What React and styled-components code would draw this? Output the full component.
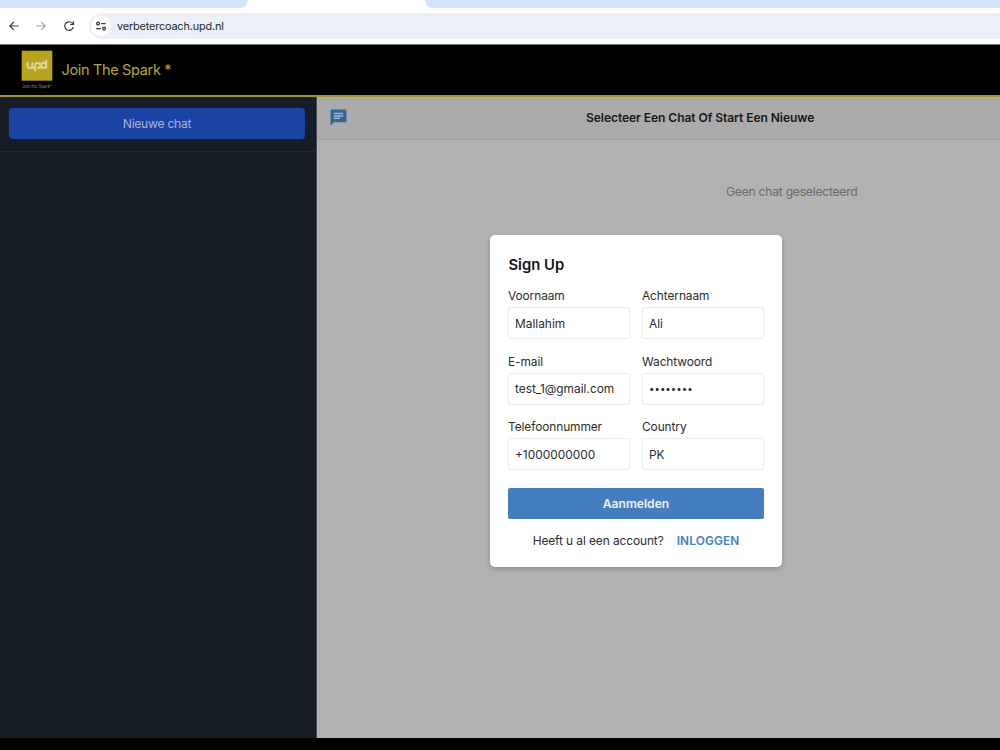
import React from 'react'
import styled, { createGlobalStyle } from 'styled-components';

const GlobalStyle = createGlobalStyle`
  * { box-sizing: border-box; }
  body {
    margin: 0;
    overflow: hidden;
    background: #000;
    font-family: Inter, "Liberation Sans", sans-serif;
  }
  button, input { font-family: inherit; }
`;

const Page = styled.div`
  width: 1000px;
  height: 750px;
  display: flex;
  flex-direction: column;
  overflow: hidden;
`;

const TabStrip = styled.div`
  height: 9px;
  flex: none;
  display: flex;
  background: #fff;
`;

const TabArea = styled.div`
  width: ${(props) => props.$width};
  margin-left: ${(props) => props.$gap || '0'};
  height: 8px;
  background: #d3e2fd;
  border-radius: ${(props) => props.$radius};
`;

const Toolbar = styled.div`
  height: 36px;
  flex: none;
  display: flex;
  align-items: center;
  padding: 0 0 1px 7px;
  background: #fff;
  border-bottom: 1px solid #707276;
`;

const NavIcon = styled.svg`
  width: 14px;
  height: 14px;
  margin-right: ${(props) => props.$gap};
  fill: none;
  stroke: ${(props) => props.$color || '#3a3d40'};
  stroke-width: 1.2;
`;

const AddressBar = styled.div`
  flex: 1;
  height: 26px;
  display: flex;
  align-items: center;
  padding-left: 2px;
  border-radius: 13px 0 0 13px;
  background: #ebf0f8;
`;

const SiteInfo = styled.div`
  width: 20px;
  height: 20px;
  display: flex;
  align-items: center;
  justify-content: center;
  border-radius: 50%;
  background: #fff;
`;

const Url = styled.span`
  margin-left: 6px;
  font-size: 10.9px;
  line-height: 16px;
  letter-spacing: -0.17px;
  color: #26282b;
`;

const Header = styled.header`
  height: 52px;
  flex: none;
  display: flex;
  align-items: flex-start;
  padding-left: 21px;
  background: #000;
  border-bottom: 2px solid #a19425;
`;

const Logo = styled.svg`
  width: 32px;
  height: 40px;
  margin-top: 5px;
`;

const Brand = styled.h1`
  margin: 16px 0 0 8.5px;
  font-size: 14.5px;
  line-height: 18px;
  letter-spacing: -0.33px;
  font-weight: 400;
  color: #b6a82b;
`;

const Main = styled.main`
  height: 641px;
  flex: none;
  display: flex;
`;

const Sidebar = styled.aside`
  width: 317px;
  background: #161d26;
  border-right: 1px solid #454b52;
`;

const SidebarTop = styled.div`
  height: 55px;
  padding: 11px 11px 0 9px;
  border-bottom: 1px solid #202a36;
`;

const NewChat = styled.button`
  display: block;
  width: 296px;
  height: 31px;
  padding: 0;
  border: 0;
  border-radius: 4px;
  background: #1b43a6;
  color: #a8b3d0;
  font-size: 12.2px;
  letter-spacing: -0.3px;
`;

const Content = styled.section`
  flex: 1;
  background: #b2b2b2;
`;

const ChatBar = styled.div`
  height: 43px;
  display: flex;
  align-items: center;
  padding-left: 12px;
  background: #ababac;
  border-bottom: 1px solid #a0a1a3;
`;

const ChatIcon = styled.svg`
  width: 19px;
  height: 19px;
  margin-top: -1px;
  fill: #32659b;
`;

const ChatTitle = styled.h2`
  margin: -2px 0 0 238px;
  font-size: 12.1px;
  font-weight: 600;
  letter-spacing: -0.09px;
  color: #17181a;
  white-space: nowrap;
`;

const EmptyState = styled.p`
  margin: 43px 0 0 409px;
  font-size: 12.2px;
  line-height: 18px;
  letter-spacing: -0.27px;
  color: #676a71;
`;

/* The modal sits over the dimmed page */
const Modal = styled.form`
  position: absolute;
  left: 490px;
  top: 235px;
  width: 292px;
  height: 332px;
  padding: 20px 18px 0;
  border-radius: 5px;
  background: #fff;
  box-shadow: 0 2px 5px rgba(0, 0, 0, 0.22);
`;

const ModalTitle = styled.h2`
  margin: 0;
  padding-left: 0.5px;
  font-size: 14.8px;
  line-height: 20px;
  font-weight: 600;
  color: #131416;
`;

const Fields = styled.div`
  display: grid;
  grid-template-columns: 122px 122px;
  column-gap: 12px;
  row-gap: 12px;
  margin-top: 12px;
`;

const Field = styled.label`
  display: block;
  height: 53.5px;
  font-size: 11.9px;
  line-height: 18px;
  letter-spacing: -0.08px;
  color: #2b2d30;
`;

const Input = styled.input`
  display: block;
  width: 100%;
  height: 32px;
  margin-top: 2px;
  padding: 0 6px;
  border: 1px solid #ebebec;
  border-radius: 2px;
  outline: none;
  background: #fff;
  color: #2b2d30;
  font-size: ${(props) => (props.type === 'password' ? '9.7px' : '11.9px')};
`;

const Submit = styled.button`
  display: block;
  width: 256px;
  height: 31px;
  margin-top: 16px;
  padding: 0;
  border: 0;
  border-radius: 2px;
  background: #457dc1;
  color: #edf3fa;
  font-size: 12.1px;
  font-weight: 600;
`;

const Footer = styled.div`
  display: flex;
  justify-content: center;
  gap: 13px;
  margin-top: 13px;
  font-size: 11.9px;
  line-height: 18px;
  letter-spacing: -0.08px;
  color: #2b2d30;
`;

const LoginLink = styled.a`
  color: #4580c5;
  font-weight: 600;
  letter-spacing: 0.1px;
`;

const BottomEdge = styled.div`
  flex: 1;
  background: #000;
`;

const fields = [
  { label: 'Voornaam', value: 'Mallahim' },
  { label: 'Achternaam', value: 'Ali' },
  { label: 'E-mail', value: 'test_1@gmail.com' },
  { label: 'Wachtwoord', value: 'password', type: 'password' },
  { label: 'Telefoonnummer', value: '+1000000000' },
  { label: 'Country', value: 'PK' },
];

const Browser = () => (
  <>
    <TabStrip>
      <TabArea $width="248px" $radius="0 0 8px 0" />
      <TabArea $width="575px" $gap="177px" $radius="0 0 0 8px" />
    </TabStrip>
    <Toolbar>
      <NavIcon viewBox="0 0 14 14" $gap="13px">
        <path d="M11.8 7H2.8M7 2.8L2.8 7L7 11.2" />
      </NavIcon>
      <NavIcon viewBox="0 0 14 14" $gap="14px" $color="#a3a6aa">
        <path d="M2.2 7h9M7 2.8L11.2 7L7 11.2" />
      </NavIcon>
      <NavIcon viewBox="0 0 14 14" $gap="13px">
        <path d="M11.2 8A4.3 4.3 0 1 1 10.2 4.2L11.3 5.4M11.5 2.2V5.5H8.2" />
      </NavIcon>
      <AddressBar>
        <SiteInfo>
          <svg width="12" height="12" viewBox="0 0 12 12" fill="none" stroke="#3a3d40" strokeWidth="1.3">
            <circle cx="3" cy="3.6" r="1.4" />
            <path d="M6.2 3.6H10.6M1.2 8.6H5.8" />
            <circle cx="9" cy="8.6" r="1.4" />
          </svg>
        </SiteInfo>
        <Url>verbetercoach.upd.nl</Url>
      </AddressBar>
    </Toolbar>
  </>
);

const LogoMark = () => (
  <Logo viewBox="0 0 32 40">
    <rect x="0.7" y="0.7" width="30.6" height="30" fill="#b9a51c" />
    <g fill="none" stroke="#ddd6a0" strokeWidth="1.9" strokeLinecap="round" strokeLinejoin="round">
      <path d="M6.5 12.5v3.2a2.4 2.4 0 0 0 4.8 0v-2.8M11.3 17.8h2.6" />
      <path d="M14.2 20.5v-5.2a2.5 2.5 0 1 1 2.5 2.6h3" />
      <path d="M25.2 10.5v7.3h-2.6a2.5 2.5 0 1 1 2.6-2.6" />
    </g>
    <text x="1" y="37.6" fontSize="4.2" textLength="30" fill="#8e8e8e">Join the Spark*</text>
  </Logo>
);

const SignUp = () => (
  <Modal>
    <ModalTitle>Sign Up</ModalTitle>
    <Fields>
      {fields.map((f) => (
        <Field key={f.label}>
          {f.label}
          <Input type={f.type || 'text'} defaultValue={f.value} />
        </Field>
      ))}
    </Fields>
    <Submit type="button">Aanmelden</Submit>
    <Footer>
      <span>Heeft u al een account?</span>
      <LoginLink>INLOGGEN</LoginLink>
    </Footer>
  </Modal>
);

const App = () => {
  return (
    <Page>
      <GlobalStyle />
      <Browser />
      <Header>
        <LogoMark />
        <Brand>Join The Spark *</Brand>
      </Header>
      <Main>
        <Sidebar>
          <SidebarTop>
            <NewChat>Nieuwe chat</NewChat>
          </SidebarTop>
        </Sidebar>
        <Content>
          <ChatBar>
            <ChatIcon viewBox="0 0 24 24">
              <path d="M21 2H3a1 1 0 0 0-1 1v19l4-4h15a1 1 0 0 0 1-1V3a1 1 0 0 0-1-1z" />
              <path fill="#a3b3c2" d="M6 6h12v2H6zM6 9h12v2H6zM6 12h8v2H6z" />
            </ChatIcon>
            <ChatTitle>Selecteer Een Chat Of Start Een Nieuwe</ChatTitle>
          </ChatBar>
          <EmptyState>Geen chat geselecteerd</EmptyState>
        </Content>
      </Main>
      <BottomEdge />
      <SignUp />
    </Page>
  );
};

export default App;
